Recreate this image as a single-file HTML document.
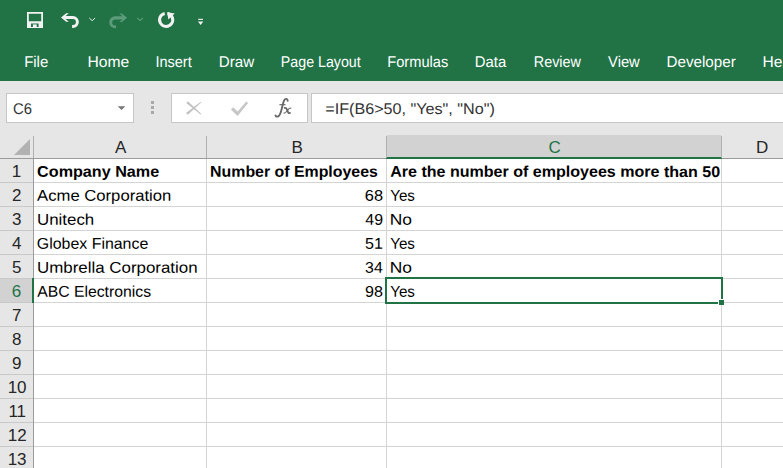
<!DOCTYPE html>
<html><head><meta charset="utf-8">
<style>
*{box-sizing:border-box;margin:0;padding:0}
html,body{width:783px;height:468px;overflow:hidden;background:#fff;font-family:"Liberation Sans",sans-serif;}
div,svg{position:absolute}
#top{left:0;top:0;width:783px;height:81px;background:#217346}
#fb{left:0;top:81px;width:783px;height:54px;background:#e6e6e6}
.box{top:93px;height:30px;background:#fff;border:1px solid #c6c6c6}
.t{left:0;top:0;white-space:nowrap;transform-origin:0 0;line-height:24px;height:24px}
.m{color:#fff;font-size:15.5px}
.ch{top:135px;height:23px;background:#e6e6e6}
.rh{left:0;width:33px;height:24px;background:#e6e6e6;border-bottom:1px solid #c9c9c9}
.h{font-size:17px;color:#262626}
.vl{width:1px;background:#d4d4d4;top:159px;height:309px}
.hl{height:1px;background:#d4d4d4;left:34px;width:749px}
.c{font-size:15.5px;color:#000}
.fbt{color:#333}
.b{font-weight:bold}
.g{color:#217346}
</style></head><body>
<div id="top"></div>
<div id="fb"></div>
<div class="box" style="left:6px;width:128px"></div>
<div class="box" style="left:171px;width:137px"></div>
<div class="box" style="left:311px;width:480px"></div>
<div class="t m" id="m0" style="transform:translate(24.14px,50px) scaleX(0.9652) rotate(0.05deg)">File</div>
<div class="t m" id="m1" style="transform:translate(87.39px,50px) scaleX(1.0101) rotate(0.05deg)">Home</div>
<div class="t m" id="m2" style="transform:translate(155.44px,50px) scaleX(0.9369) rotate(0.05deg)">Insert</div>
<div class="t m" id="m3" style="transform:translate(218.83px,50px) scaleX(0.9771) rotate(0.05deg)">Draw</div>
<div class="t m" id="m4" style="transform:translate(280.85px,50px) scaleX(0.9178) rotate(0.05deg)">Page Layout</div>
<div class="t m" id="m5" style="transform:translate(387.32px,50px) scaleX(0.9434) rotate(0.05deg)">Formulas</div>
<div class="t m" id="m6" style="transform:translate(474.84px,50px) scaleX(0.9606) rotate(0.05deg)">Data</div>
<div class="t m" id="m7" style="transform:translate(533.84px,50px) scaleX(0.9253) rotate(0.05deg)">Review</div>
<div class="t m" id="m8" style="transform:translate(608.11px,50px) scaleX(0.9504) rotate(0.05deg)">View</div>
<div class="t m" id="m9" style="transform:translate(666.63px,50px) scaleX(0.9776) rotate(0.05deg)">Developer</div>
<div class="t m" id="m10" style="transform:translate(762.59px,50px) scaleX(1.0056) rotate(0.05deg)">He</div>
<div class="ch" style="left:0;width:783px"></div>
<div class="ch" style="left:34px;width:172px;"></div>
<div class="ch" style="left:207px;width:179px;"></div>
<div class="ch" style="left:387px;width:334px;background:#d2d2d2;"></div>
<div class="ch" style="left:722px;width:80px;"></div>
<div style="left:0;top:158px;width:783px;height:1px;background:#9b9b9b"></div>
<div style="left:386px;top:157px;width:336px;height:2px;background:#217346"></div>
<div style="left:33px;top:136px;width:1px;height:22px;background:#b0b0b0"></div>
<div style="left:206px;top:136px;width:1px;height:22px;background:#b0b0b0"></div>
<div style="left:386px;top:136px;width:1px;height:22px;background:#b0b0b0"></div>
<div style="left:721px;top:136px;width:1px;height:22px;background:#b0b0b0"></div>
<svg style="left:14px;top:139px" width="17" height="17"><path d="M16 0V16H0Z" fill="#b2b2b2"/></svg>
<div class="rh" style="top:159px;"></div>
<div class="rh" style="top:183px;"></div>
<div class="rh" style="top:207px;"></div>
<div class="rh" style="top:231px;"></div>
<div class="rh" style="top:255px;"></div>
<div class="rh" style="top:279px;background:#d2d2d2;"></div>
<div class="rh" style="top:303px;"></div>
<div class="rh" style="top:327px;"></div>
<div class="rh" style="top:351px;"></div>
<div class="rh" style="top:375px;"></div>
<div class="rh" style="top:399px;"></div>
<div class="rh" style="top:423px;"></div>
<div class="rh" style="top:447px;"></div>
<div style="left:33px;top:159px;width:1px;height:309px;background:#9b9b9b"></div>
<div style="left:32px;top:278px;width:2px;height:25px;background:#217346"></div>
<div class="hl" style="top:182px"></div>
<div class="hl" style="top:206px"></div>
<div class="hl" style="top:230px"></div>
<div class="hl" style="top:254px"></div>
<div class="hl" style="top:278px"></div>
<div class="hl" style="top:302px"></div>
<div class="hl" style="top:326px"></div>
<div class="hl" style="top:350px"></div>
<div class="hl" style="top:374px"></div>
<div class="hl" style="top:398px"></div>
<div class="hl" style="top:422px"></div>
<div class="hl" style="top:446px"></div>
<div class="hl" style="top:470px"></div>
<div class="vl" style="left:206px"></div>
<div class="vl" style="left:386px"></div>
<div class="vl" style="left:721px"></div>
<div class="t h" id="hA" style="transform:translate(114.92px,136px) scaleX(1.0000)">A</div>
<div class="t h" id="hB" style="transform:translate(291.57px,136px) scaleX(1.0000)">B</div>
<div class="t h g" id="hC" style="transform:translate(548.40px,136px) scaleX(1.0000)">C</div>
<div class="t h" id="hD" style="transform:translate(756.08px,136px) scaleX(1.0000)">D</div>
<div class="t h" id="r1" style="transform:translate(11.75px,160px) scaleX(1.0000)">1</div>
<div class="t h" id="r2" style="transform:translate(11.88px,184px) scaleX(1.0000)">2</div>
<div class="t h" id="r3" style="transform:translate(11.88px,208px) scaleX(1.0000)">3</div>
<div class="t h" id="r4" style="transform:translate(11.88px,232px) scaleX(1.0000)">4</div>
<div class="t h" id="r5" style="transform:translate(11.88px,256px) scaleX(1.0000)">5</div>
<div class="t h g" id="r6" style="transform:translate(11.75px,280px) scaleX(1.0000)">6</div>
<div class="t h" id="r7" style="transform:translate(11.88px,304px) scaleX(1.0000)">7</div>
<div class="t h" id="r8" style="transform:translate(11.88px,328px) scaleX(1.0000)">8</div>
<div class="t h" id="r9" style="transform:translate(12.00px,352px) scaleX(1.0000)">9</div>
<div class="t h" id="r10" style="transform:translate(7.67px,376px) scaleX(1.0000)">10</div>
<div class="t h" id="r11" style="transform:translate(8.42px,400px) scaleX(1.0000)">11</div>
<div class="t h" id="r12" style="transform:translate(7.80px,424px) scaleX(1.0000)">12</div>
<div class="t h" id="r13" style="transform:translate(7.67px,448px) scaleX(1.0000)">13</div>
<div class="t c b" id="c0" style="transform:translate(37.13px,159.65px) scaleX(1.0414) rotate(0.05deg)">Company Name</div>
<div class="t c" id="c1" style="transform:translate(37.09px,183.65px) scaleX(1.0747) rotate(0.05deg)">Acme Corporation</div>
<div class="t c" id="c2" style="transform:translate(37.06px,207.65px) scaleX(1.0871) rotate(0.05deg)">Unitech</div>
<div class="t c" id="c3" style="transform:translate(36.88px,231.65px) scaleX(1.0262) rotate(0.05deg)">Globex Finance</div>
<div class="t c" id="c4" style="transform:translate(37.06px,255.65px) scaleX(1.0898) rotate(0.05deg)">Umbrella Corporation</div>
<div class="t c" id="c5" style="transform:translate(37.15px,279.65px) scaleX(1.0170) rotate(0.05deg)">ABC Electronics</div>
<div class="t c b" id="c6" style="transform:translate(210.12px,159.65px) scaleX(1.0247) rotate(0.05deg)">Number of Employees</div>
<div class="t c" id="c7" style="transform:translate(364.86px,183.65px) scaleX(1.0540) rotate(0.05deg)">68</div>
<div class="t c" id="c8" style="transform:translate(365.39px,207.65px) scaleX(1.0215) rotate(0.05deg)">49</div>
<div class="t c" id="c9" style="transform:translate(365.13px,231.65px) scaleX(1.0375) rotate(0.05deg)">51</div>
<div class="t c" id="c10" style="transform:translate(365.14px,255.65px) scaleX(1.0215) rotate(0.05deg)">34</div>
<div class="t c" id="c11" style="transform:translate(365.13px,279.65px) scaleX(1.0375) rotate(0.05deg)">98</div>
<div class="t c b" id="c12" style="transform:translate(390.19px,159.65px) scaleX(1.0351) rotate(0.05deg)">Are the number of employees more than 50</div>
<div class="t c" id="c13" style="transform:translate(390.21px,183.65px) scaleX(0.9773) rotate(0.05deg)">Yes</div>
<div class="t c" id="c14" style="transform:translate(389.74px,207.65px) scaleX(1.1222) rotate(0.05deg)">No</div>
<div class="t c" id="c15" style="transform:translate(390.21px,231.65px) scaleX(0.9773) rotate(0.05deg)">Yes</div>
<div class="t c" id="c16" style="transform:translate(389.74px,255.65px) scaleX(1.1222) rotate(0.05deg)">No</div>
<div class="t c" id="c17" style="transform:translate(390.21px,279.65px) scaleX(0.9773) rotate(0.05deg)">Yes</div>
<div style="left:385px;top:277px;width:338px;height:27px;border:2px solid #217346"></div>
<div style="left:718px;top:299px;width:6px;height:6px;background:#217346;border-left:1px solid #fff;border-top:1px solid #fff"></div>
<div class="t c fbt" id="nb" style="transform:translate(13.13px,96.9px) scaleX(0.9568) rotate(0.05deg)">C6</div>
<div class="t c fbt" id="fx" style="transform:translate(325.27px,96.9px) scaleX(1.0419) rotate(0.05deg)">=IF(B6&gt;50, "Yes", "No")</div>
<!-- quick access toolbar -->
<svg style="left:0;top:0" width="220" height="40" viewBox="0 0 220 40">
<!-- save -->
<path d="M27 12H43V28H27Z M28.8 13.7V21.2H41.2V13.7Z M31 23.4V26.9H38.6V23.4Z" fill="#f2f2f2" fill-rule="evenodd"/>
<rect x="32.9" y="24.4" width="3.8" height="2.6" fill="#f2f2f2"/>
<!-- undo -->
<path id="un" d="M61 17.5L66.2 13.2H68.8L65.6 16.05H72.9A5.95 5.95 0 0 1 72.9 27.95H72.1V25.1H72.9A3 3 0 0 0 72.9 19.1H65.6L68.8 21.8H66.2Z" fill="#f2f2f2"/>
<path d="M89.3 18L92.2 20.7L95.1 18" fill="none" stroke="#e4ece7" stroke-width="1"/>
<!-- redo (dim) -->
<path transform="translate(188.1,0.3) scale(-1,1)" d="M61 17.5L66.2 13.2H68.8L65.6 16.05H72.9A5.95 5.95 0 0 1 72.9 27.95H72.1V25.1H72.9A3 3 0 0 0 72.9 19.1H65.6L68.8 21.8H66.2Z" fill="#5c9c7a"/>
<path d="M137.3 18L140.1 20.6L142.9 18" fill="none" stroke="#5c9c7a" stroke-width="1.1"/>
<!-- repeat -->
<path d="M164.7 13.45A6.6 6.6 0 1 0 167.8 13.5" fill="none" stroke="#f2f2f2" stroke-width="3"/>
<path d="M167 12.2L174.7 13.4L168.4 19.5Z" fill="#f2f2f2"/>
<!-- customize -->
<rect x="198.2" y="18.8" width="4.8" height="1.1" fill="#f2f2f2"/>
<path d="M197.9 21.6H203.3L200.6 24.9Z" fill="#f2f2f2"/>
</svg>
<!-- name box arrow, dots -->
<svg style="left:0;top:85px" width="320" height="45" viewBox="0 85 320 45">
<path d="M117.6 106.2H125.4L121.5 110Z" fill="#777"/>
<rect x="151" y="101" width="3" height="3" fill="#a8a8a8"/>
<rect x="151" y="106" width="3" height="3" fill="#a8a8a8"/>
<rect x="151" y="111" width="3" height="3" fill="#a8a8a8"/>
<path d="M186.3 102.9L187.9 101.2L201.2 113.8L200.5 114.5Z" fill="#c2c2c2"/>
<path d="M186 112.9L187.9 114.8L201.4 102.3L200.7 101.7Z" fill="#c2c2c2"/>
<path d="M230.9 109.4L233.2 107.2L237.6 111.4L246.3 101.6L248.1 103L237.6 116Z" fill="#c6c6c6"/>
</svg>
<svg style="left:262px;top:92px" width="50" height="32" viewBox="262 92 50 32" fill="none" stroke="#686868" stroke-linecap="round">
<path d="M287.7 100.7C287.6 98.7 285.4 98.1 284.3 100.1C283.3 102 282.7 105 281.7 109C280.7 113 279.8 116.3 277.7 116.6C276.5 116.7 275.7 116.2 275.5 115.4" stroke-width="1.9"/>
<path d="M279.4 104.7H285.5" stroke-width="1.2" stroke-linecap="butt"/>
<path d="M284.7 107.9C286 107.4 286.7 108.6 287.3 110.4C287.9 112.2 288.5 113.7 290 113" stroke-width="1.8"/>
<path d="M290.9 108.2C289.5 107.5 288.6 109 287.3 110.5C286 112 285.2 113.7 284 113" stroke-width="1.1"/>
</svg>

</body></html>
